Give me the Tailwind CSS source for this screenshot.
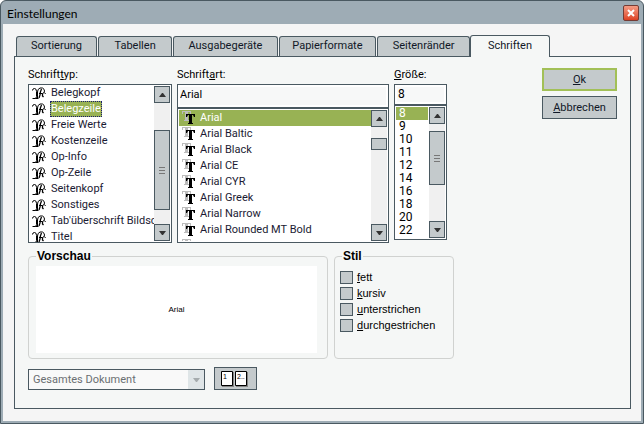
<!DOCTYPE html>
<html lang="de">
<head>
  <meta charset="utf-8">
  <meta name="viewport" content="width=device-width, initial-scale=1">
  <title>Einstellungen</title>
  <script src="https://cdn.jsdelivr.net/npm/@tailwindcss/browser@4"></script>
</head>
<body class="bg-white">
  <!-- icons shared by the list rows -->
  <svg class="hidden" aria-hidden="true">
    <symbol id="icon-style" viewBox="0 0 14 14">
      <g fill="none" stroke="#000">
        <path d="M.5 4.500q0-2 2-2q2 0 2 3v5q0 2-1.500 2h-2.500M3.500 12.500h3"/>
        <path d="M5.500 12v-6q0-3 2.500-4h2.500q2 1 2 3q0 2-2 2.500h-3.500"/>
        <path stroke-width="1.300" d="M9.500 3q-1.500 3-1.500 6l-1 3M10.500 7.500v2.500l1 1"/>
        <path d="M12.500 6.500l1 1.500"/>
      </g>
    </symbol>
    <symbol id="icon-truetype" viewBox="0 0 13 14">
      <path fill="#bcbcbc" d="M0 0h9v3h-1v-2h-2v8h1v1h-5v-1h1v-8h-2v2h-1z"/>
      <path fill="#000" d="M4 3h9v3h-1l-1-2h-1v8h1v1h-5v-1h1v-8h-1l-1 2h-1z"/>
    </symbol>
    <symbol id="icon-up" viewBox="0 0 7 4"><path d="M3 0h1l3 4h-7z"/></symbol>
    <symbol id="icon-down" viewBox="0 0 7 4"><path d="M0 0h7l-3 4h-1z"/></symbol>
  </svg>

  <main class="flex min-h-screen flex-col rounded-t-md border border-[#4a5961] bg-[#9eacb5] font-[Roboto,'Liberation_Sans',sans-serif] text-[11px] leading-4 text-[#111827]">
    <header class="flex h-[23px] items-center justify-between pl-1.5 pr-1">
      <h1 class="pt-0.5 font-[Lato,sans-serif] text-[12px] font-normal text-black">Einstellungen</h1>
      <button type="button" aria-label="Schließen" class="flex size-4 items-center justify-center rounded-[2px] border border-[#753c35] bg-gradient-to-b from-[#f39b84] to-[#dd3f20]">
        <svg class="size-2" viewBox="0 0 8 8" stroke="#fff" stroke-width="2"><path d="M1 1l6 6M7 1l-6 6"/></svg>
      </button>
    </header>

    <div class="mx-0.5 mb-0.5 flex flex-1 flex-col bg-[#f5f5f5] pb-3 pl-[11px] pr-2.5 pt-[11px]">
      <nav role="tablist" class="z-10 -mb-px flex items-end gap-px pl-0.5 pr-[81px]">
        <button role="tab" type="button" class="mb-px h-5 flex-[81] rounded-t-[3px] border border-b-0 border-[#4a5961] bg-[#c4cacc] pb-0.5">Sortierung</button>
        <button role="tab" type="button" class="mb-px h-5 flex-[74] rounded-t-[3px] border border-b-0 border-[#4a5961] bg-[#c4cacc] pb-0.5">Tabellen</button>
        <button role="tab" type="button" class="mb-px h-5 flex-[105] rounded-t-[3px] border border-b-0 border-[#4a5961] bg-[#c4cacc] pb-0.5">Ausgabegeräte</button>
        <button role="tab" type="button" class="mb-px h-5 flex-[98] rounded-t-[3px] border border-b-0 border-[#4a5961] bg-[#c4cacc] pb-0.5">Papierformate</button>
        <button role="tab" type="button" class="mb-px h-5 flex-[93] rounded-t-[3px] border border-b-0 border-[#4a5961] bg-[#c4cacc] pb-0.5">Seitenränder</button>
        <button role="tab" type="button" aria-selected="true" class="-ml-px h-[22px] flex-[80] rounded-t-[3px] border border-b-0 border-[#4a5961] bg-[#f5f7f6] pb-0.5">Schriften</button>
      </nav>

      <form class="flex flex-1 items-start gap-[88px] border border-[#4a5961] bg-[#f5f7f6] px-[13px] pt-2.5">
        <div class="flex-1">
          <div class="grid grid-cols-[144fr_212fr_53fr] items-start gap-[5px] pr-[7px] text-black">
            <div class="min-w-0">
              <h2 id="type-label" class="mb-px">Schrift<u>t</u>yp:</h2>
              <div class="flex h-[159px] border border-[#4a5961] bg-white px-px">
                <ul role="listbox" aria-labelledby="type-label" class="min-w-0 flex-1 overflow-hidden whitespace-nowrap text-[#1b1b33]">
                  <li role="option" class="flex h-4 items-center gap-1 pl-0.5"><svg class="size-3.5 shrink-0"><use href="#icon-style"/></svg><span class="px-px">Belegkopf</span></li>
                  <li role="option" aria-selected="true" class="flex h-4 items-center gap-1 pl-0.5"><svg class="size-3.5 shrink-0"><use href="#icon-style"/></svg><span class="bg-[#98b254] px-px text-white outline-1 -outline-offset-1 outline-dotted outline-[#1b1b73]">Belegzeile</span></li>
                  <li role="option" class="flex h-4 items-center gap-1 pl-0.5"><svg class="size-3.5 shrink-0"><use href="#icon-style"/></svg><span class="px-px">Freie Werte</span></li>
                  <li role="option" class="flex h-4 items-center gap-1 pl-0.5"><svg class="size-3.5 shrink-0"><use href="#icon-style"/></svg><span class="px-px">Kostenzeile</span></li>
                  <li role="option" class="flex h-4 items-center gap-1 pl-0.5"><svg class="size-3.5 shrink-0"><use href="#icon-style"/></svg><span class="px-px">Op-Info</span></li>
                  <li role="option" class="flex h-4 items-center gap-1 pl-0.5"><svg class="size-3.5 shrink-0"><use href="#icon-style"/></svg><span class="px-px">Op-Zeile</span></li>
                  <li role="option" class="flex h-4 items-center gap-1 pl-0.5"><svg class="size-3.5 shrink-0"><use href="#icon-style"/></svg><span class="px-px">Seitenkopf</span></li>
                  <li role="option" class="flex h-4 items-center gap-1 pl-0.5"><svg class="size-3.5 shrink-0"><use href="#icon-style"/></svg><span class="px-px">Sonstiges</span></li>
                  <li role="option" class="flex h-4 items-center gap-1 pl-0.5"><svg class="size-3.5 shrink-0"><use href="#icon-style"/></svg><span class="px-px">Tab'überschrift Bildschirm</span></li>
                  <li role="option" class="flex h-4 items-center gap-1 pl-0.5"><svg class="size-3.5 shrink-0"><use href="#icon-style"/></svg><span class="px-px">Titel</span></li>
                </ul>
                <div class="my-px flex w-4 shrink-0 flex-col bg-[#f0f0f0] fill-[#333]">
                  <button type="button" aria-label="Nach oben" class="flex h-[17px] items-center justify-center border border-[#4a5961] bg-[#c4cacc]"><svg class="h-1 w-[7px]"><use href="#icon-up"/></svg></button>
                  <div class="flex-[27]"></div>
                  <div class="flex h-20 flex-col items-center justify-center gap-0.5 border border-[#4a5961] bg-[#c4cacc]"><i class="h-px w-1.5 bg-[#777]"></i><i class="h-px w-1.5 bg-[#777]"></i><i class="h-px w-1.5 bg-[#777]"></i></div>
                  <div class="flex-[14]"></div>
                  <button type="button" aria-label="Nach unten" class="flex h-[17px] items-center justify-center border border-[#4a5961] bg-[#c4cacc]"><svg class="h-1 w-[7px]"><use href="#icon-down"/></svg></button>
                </div>
              </div>
            </div>

            <div class="min-w-0">
              <label for="font-name" class="mb-px block">Schrift<u>a</u>rt:</label>
              <input id="font-name" type="text" value="Arial" class="block h-6 w-full border border-[#4a5961] bg-[#f7f8f8] px-0.5 pb-1 outline-2 -outline-offset-3 outline-white">
              <div class="flex h-[135px] border border-[#4a5961] bg-white p-px">
                <ul role="listbox" aria-label="Schriftart" class="min-w-0 flex-1 overflow-hidden whitespace-nowrap text-[#1b1b33]">
                  <li role="option" aria-selected="true" class="flex h-4 items-center gap-[5px] bg-[#98b254] pl-[3px] text-white"><svg class="h-3.5 w-[13px] shrink-0"><use href="#icon-truetype"/></svg>Arial</li>
                  <li role="option" class="flex h-4 items-center gap-[5px] pl-[3px]"><svg class="h-3.5 w-[13px] shrink-0"><use href="#icon-truetype"/></svg>Arial Baltic</li>
                  <li role="option" class="flex h-4 items-center gap-[5px] pl-[3px]"><svg class="h-3.5 w-[13px] shrink-0"><use href="#icon-truetype"/></svg>Arial Black</li>
                  <li role="option" class="flex h-4 items-center gap-[5px] pl-[3px]"><svg class="h-3.5 w-[13px] shrink-0"><use href="#icon-truetype"/></svg>Arial CE</li>
                  <li role="option" class="flex h-4 items-center gap-[5px] pl-[3px]"><svg class="h-3.5 w-[13px] shrink-0"><use href="#icon-truetype"/></svg>Arial CYR</li>
                  <li role="option" class="flex h-4 items-center gap-[5px] pl-[3px]"><svg class="h-3.5 w-[13px] shrink-0"><use href="#icon-truetype"/></svg>Arial Greek</li>
                  <li role="option" class="flex h-4 items-center gap-[5px] pl-[3px]"><svg class="h-3.5 w-[13px] shrink-0"><use href="#icon-truetype"/></svg>Arial Narrow</li>
                  <li role="option" class="flex h-4 items-center gap-[5px] pl-[3px]"><svg class="h-3.5 w-[13px] shrink-0"><use href="#icon-truetype"/></svg>Arial Rounded MT Bold</li>
                  <li role="option" class="flex h-4 items-center gap-[5px] pl-[3px]"><svg class="h-3.5 w-[13px] shrink-0"><use href="#icon-truetype"/></svg>Arial TUR</li>
                </ul>
                <div class="flex w-4 shrink-0 flex-col bg-[#f0f0f0] fill-[#333]">
                  <button type="button" aria-label="Nach oben" class="flex h-[17px] items-center justify-center border border-[#4a5961] bg-[#c4cacc]"><svg class="h-1 w-[7px]"><use href="#icon-up"/></svg></button>
                  <div class="flex-[11]"></div>
                  <div class="h-3 border border-[#4a5961] bg-[#c4cacc]"></div>
                  <div class="flex-[74]"></div>
                  <button type="button" aria-label="Nach unten" class="flex h-[17px] items-center justify-center border border-[#4a5961] bg-[#c4cacc]"><svg class="h-1 w-[7px]"><use href="#icon-down"/></svg></button>
                </div>
              </div>
            </div>

            <div class="min-w-0">
              <label for="font-size" class="mb-px block"><u>G</u>röße:</label>
              <input id="font-size" type="text" value="8" class="block h-[21px] w-full border border-[#4a5961] bg-[#f7f8f8] px-[3px] pb-0.5 text-[12px] outline-2 -outline-offset-3 outline-white">
              <div class="flex h-[135px] border border-[#4a5961] bg-white p-px">
                <ul role="listbox" aria-label="Größe" class="min-w-0 flex-1 overflow-hidden text-[12px] leading-[13px]">
                  <li role="option" aria-selected="true" class="mr-px bg-[#98b254] pl-[3px] text-white">8</li>
                  <li role="option" class="pl-[3px]">9</li>
                  <li role="option" class="pl-[3px]">10</li>
                  <li role="option" class="pl-[3px]">11</li>
                  <li role="option" class="pl-[3px]">12</li>
                  <li role="option" class="pl-[3px]">14</li>
                  <li role="option" class="pl-[3px]">16</li>
                  <li role="option" class="pl-[3px]">18</li>
                  <li role="option" class="pl-[3px]">20</li>
                  <li role="option" class="pl-[3px]">22</li>
                </ul>
                <div class="flex w-4 shrink-0 flex-col bg-[#f0f0f0] fill-[#333]">
                  <button type="button" aria-label="Nach oben" class="flex h-[17px] items-center justify-center border border-[#4a5961] bg-[#c4cacc]"><svg class="h-1 w-[7px]"><use href="#icon-up"/></svg></button>
                  <div class="flex-[7]"></div>
                  <div class="flex h-[54px] flex-col items-center justify-center gap-0.5 border border-[#4a5961] bg-[#c4cacc]"><i class="h-px w-1.5 bg-[#777]"></i><i class="h-px w-1.5 bg-[#777]"></i><i class="h-px w-1.5 bg-[#777]"></i></div>
                  <div class="flex-[36]"></div>
                  <button type="button" aria-label="Nach unten" class="flex h-[17px] items-center justify-center border border-[#4a5961] bg-[#c4cacc]"><svg class="h-1 w-[7px]"><use href="#icon-down"/></svg></button>
                </div>
              </div>
            </div>
          </div>

          <div class="mt-[5px] grid grid-cols-[300fr_120fr] gap-1.5 font-['Liberation_Sans',sans-serif] text-black">
            <fieldset class="h-[111px] rounded border border-[#d0d2d0] px-[7px]">
              <legend class="px-px text-[12px] font-bold">Vorschau</legend>
              <div class="mr-[3px] mt-0.5 flex h-[87px] items-center justify-center bg-white text-[8px]">Arial</div>
            </fieldset>
            <fieldset class="h-[111px] rounded border border-[#d0d2d0] px-[5px]">
              <legend class="ml-0.5 px-px text-[12px] font-bold">Stil</legend>
              <div class="mt-[5px] text-[11px]">
                <label class="flex h-4 items-center gap-1"><input type="checkbox" class="size-[13px] appearance-none border border-[#4a5961] bg-[#c4cacc]"><span><u>f</u>ett</span></label>
                <label class="flex h-4 items-center gap-1"><input type="checkbox" class="size-[13px] appearance-none border border-[#4a5961] bg-[#c4cacc]"><span><u>k</u>ursiv</span></label>
                <label class="flex h-4 items-center gap-1"><input type="checkbox" class="size-[13px] appearance-none border border-[#4a5961] bg-[#c4cacc]"><span><u>u</u>nterstrichen</span></label>
                <label class="flex h-4 items-center gap-1"><input type="checkbox" class="size-[13px] appearance-none border border-[#4a5961] bg-[#c4cacc]"><span><u>d</u>urchgestrichen</span></label>
              </div>
            </fieldset>
          </div>

          <div class="mt-2 flex items-end gap-[9px]">
            <div class="relative w-[177px]">
              <select disabled aria-label="Bereich" class="block h-[21px] w-full appearance-none border border-[#4a5961] bg-[#f9f9f9] px-1 text-[#6b6f72] opacity-100">
                <option>Gesamtes Dokument</option>
              </select>
              <span class="pointer-events-none absolute inset-y-px right-px flex w-4 items-center justify-center bg-[#dfe5e7]"><svg class="h-1 w-[7px] fill-[#a5abad]"><use href="#icon-down"/></svg></span>
            </div>
            <button type="button" aria-label="Seiten" class="flex h-[23px] w-[43px] items-center border border-[#4a5961] bg-[#c4cacc] pl-[5px]">
              <svg class="h-4 w-7" viewBox="0 0 28 16">
                <path fill="#848484" d="M2 1h12v15h-12zM16 1h12v15h-12z"/>
                <path fill="#fff" stroke="#000" d="M1.500 .5h11v14h-11zM15.500 .5h11v14h-11z"/>
                <text x="3" y="8" font-family="Liberation Sans" font-size="7">1</text>
                <text x="17" y="8" font-family="Liberation Sans" font-size="7">2..</text>
              </svg>
            </button>
          </div>
        </div>

        <div class="mt-px flex w-[75px] flex-col gap-[5px]">
          <button type="submit" class="h-[23px] border-2 border-[#a2c057] bg-[#c4cacc]"><u>O</u>k</button>
          <button type="button" class="h-[23px] border border-[#4a5961] bg-[#c4cacc]"><u>A</u>bbrechen</button>
        </div>
      </form>
    </div>
  </main>
</body>
</html>
